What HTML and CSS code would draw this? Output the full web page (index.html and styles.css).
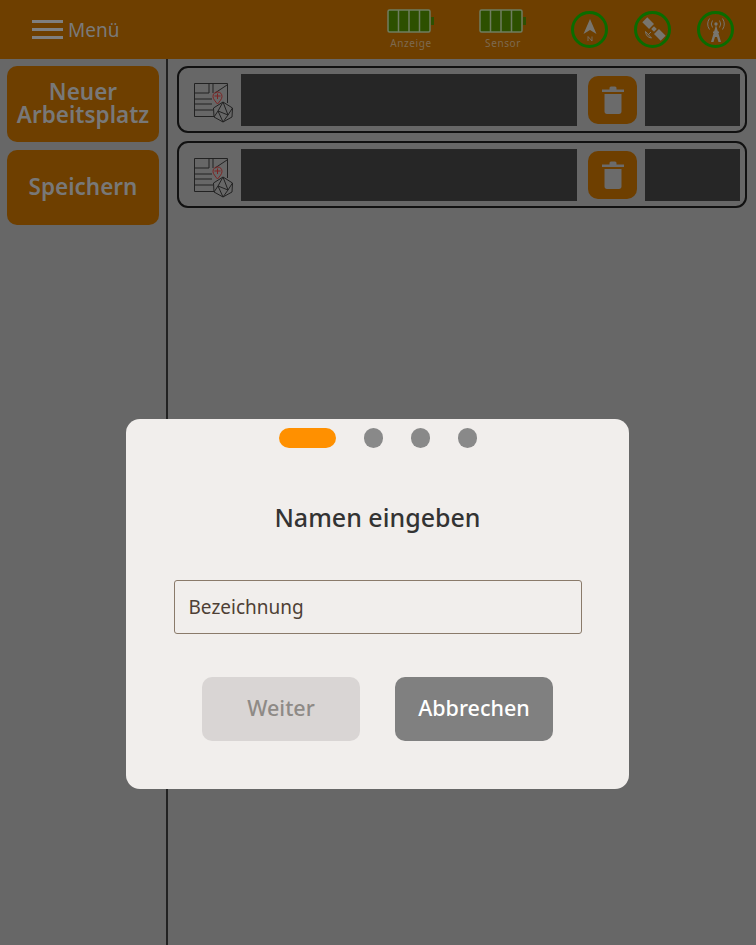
FILE: index.html
```html
<!DOCTYPE html>
<html lang="de">
<head>
    <meta charset="UTF-8">
    <meta name="viewport" content="width=device-width, initial-scale=1.0">
    <title>Arbeitsplatz</title>
    <link rel="stylesheet" href="styles.css">
</head>
<body>
    <header class="topbar">
        <div class="menu">
            <div class="burger"><span></span><span></span><span></span></div>
            <span class="menu-label">Menü</span>
        </div>
        <div class="battery">
            <svg width="48" height="24" viewBox="0 0 48 24">
                <rect x="1" y="1" width="42" height="22" rx="1.5" fill="#2d5000" stroke="#6f7d5f" stroke-width="1.5"/>
                <path d="M11.5 1v22M22 1v22M32.5 1v22" stroke="#6f7d5f" stroke-width="1.5"/>
                <rect x="44" y="8" width="3" height="8" fill="#2d5000"/>
            </svg>
            <span>Anzeige</span>
        </div>
        <div class="battery">
            <svg width="48" height="24" viewBox="0 0 48 24">
                <rect x="1" y="1" width="42" height="22" rx="1.5" fill="#2d5000" stroke="#6f7d5f" stroke-width="1.5"/>
                <path d="M11.5 1v22M22 1v22M32.5 1v22" stroke="#6f7d5f" stroke-width="1.5"/>
                <rect x="44" y="8" width="3" height="8" fill="#2d5000"/>
            </svg>
            <span>Sensor</span>
        </div>
        <div class="status">
            <svg width="18" height="24" viewBox="0 0 18 24">
                <path d="M9 1L15.500 16L9 12L2.500 16Z" fill="#78756e"/>
                <path d="M7 23v-4.500l4 4.500v-4.500" fill="none" stroke="#78756e" stroke-width="0.800"/>
            </svg>
        </div>
        <div class="status">
            <svg width="26" height="26" viewBox="0 0 26 26">
                <g transform="rotate(45 14 12)" fill="#78756e">
                    <rect x="12" y="10" width="4" height="4"/>
                    <rect x="1" y="8.500" width="9.500" height="7"/>
                    <rect x="17.500" y="8.500" width="9.500" height="7"/>
                </g>
                <path d="M5.500 14.500a7 7 0 0 0 6 6.500M5.500 14.500l6 6.500M8 18l3-3" fill="none" stroke="#78756e" stroke-width="1"/>
            </svg>
        </div>
        <div class="status">
            <svg width="24" height="28" viewBox="0 0 24 28">
                <path d="M12 9L7 26H9.500L11 21H13L14.500 26H17L12 9Z" fill="#78756e"/>
                <rect x="9" y="15.500" width="6" height="1.500" fill="#78756e"/>
                <circle cx="12" cy="8" r="1.700" fill="#78756e"/>
                <path d="M8.500 4.500a6 6 0 0 0 0 7M15.500 4.500a6 6 0 0 1 0 7M5.500 2.500a10 10 0 0 0 0 11M18.500 2.500a10 10 0 0 1 0 11" fill="none" stroke="#78756e" stroke-width="1"/>
            </svg>
        </div>
    </header>

    <div class="main">
        <aside class="sidebar">
            <button class="side-btn first">Neuer Arbeitsplatz</button>
            <button class="side-btn">Speichern</button>
        </aside>
        <section class="list">
            <div class="row">
                <svg class="row-icon" width="42" height="42" viewBox="0 0 42 42">
                    <g fill="none" stroke="#222" stroke-width="1">
                        <path d="M22 35.500H2.500V2.500H35.500V22M2.500 12H17V2.500M21 2.500V12M2.500 18H20M2.500 23H20M2.500 29H21M35 4L23 12"/>
                        <path d="M31 21L40.500 27L40 36L31 41L22 36L21.500 27ZM31 21L26 30L36 34L40.500 27M26 30L22 36M26 30L31 41L36 34L31 21"/>
                    </g>
                    <path d="M25.500 11c3 0 4.500 2 4.500 4.500 0 2.500-2.500 5-4.500 7.500-2-2.500-4.500-5-4.500-7.500 0-2.500 1.500-4.500 4.500-4.500ZM22.500 15h6M25.500 12.500V18" fill="none" stroke="#7e2424" stroke-width="1"/>
                </svg>
                <div class="dark-cell wide"></div>
                <button class="trash">
                    <svg width="22" height="28" viewBox="0 0 22 28">
                        <path d="M0 3.500H22V6H0ZM7.500 2C7.500 1 8.500 .5 9.500 .5H12.500C13.500 .5 14.500 1 14.500 2V3.500H7.500ZM2.500 8H19.500V25.500C19.500 27 18.500 28 17 28H5C3.500 28 2.500 27 2.500 25.500Z" fill="#6b6b6b"/>
                    </svg>
                </button>
                <div class="dark-cell narrow"></div>
            </div>
            <div class="row">
                <svg class="row-icon" width="42" height="42" viewBox="0 0 42 42">
                    <g fill="none" stroke="#222" stroke-width="1">
                        <path d="M22 35.500H2.500V2.500H35.500V22M2.500 12H17V2.500M21 2.500V12M2.500 18H20M2.500 23H20M2.500 29H21M35 4L23 12"/>
                        <path d="M31 21L40.500 27L40 36L31 41L22 36L21.500 27ZM31 21L26 30L36 34L40.500 27M26 30L22 36M26 30L31 41L36 34L31 21"/>
                    </g>
                    <path d="M25.500 11c3 0 4.500 2 4.500 4.500 0 2.500-2.500 5-4.500 7.500-2-2.500-4.500-5-4.500-7.500 0-2.500 1.500-4.500 4.500-4.500ZM22.500 15h6M25.500 12.500V18" fill="none" stroke="#7e2424" stroke-width="1"/>
                </svg>
                <div class="dark-cell wide"></div>
                <button class="trash">
                    <svg width="22" height="28" viewBox="0 0 22 28">
                        <path d="M0 3.500H22V6H0ZM7.500 2C7.500 1 8.500 .5 9.500 .5H12.500C13.500 .5 14.500 1 14.500 2V3.500H7.500ZM2.500 8H19.500V25.500C19.500 27 18.500 28 17 28H5C3.500 28 2.500 27 2.500 25.500Z" fill="#6b6b6b"/>
                    </svg>
                </button>
                <div class="dark-cell narrow"></div>
            </div>
        </section>
    </div>

    <!-- Dialog -->
    <div class="overlay">
        <div class="dialog">
            <div class="steps">
                <span class="step active"></span>
                <span class="step"></span>
                <span class="step"></span>
                <span class="step"></span>
            </div>
            <h2>Namen eingeben</h2>
            <input class="name-input" type="text" placeholder="Bezeichnung">
            <div class="actions">
                <button class="btn disabled">Weiter</button>
                <button class="btn cancel">Abbrechen</button>
            </div>
        </div>
    </div>
</body>
</html>
```

FILE: styles.css
```css
* {
    box-sizing: border-box;
}
body {
    font-family: "Noto Sans", sans-serif;
    margin: 0;
    padding: 0;
    height: 945px;
    overflow: hidden;
    background-color: #676767;
}
button {
    font-family: inherit;
    border: none;
    padding: 0;
}

/* Top bar */
.topbar {
    display: flex;
    align-items: center;
    height: 59px;
    padding-left: 32px;
    background-color: #6e3f00;
}
.menu {
    display: flex;
    align-items: center;
    gap: 5px;
    width: 355px;
}
.burger {
    display: flex;
    flex-direction: column;
    gap: 5px;
    width: 31px;
}
.burger span {
    height: 3px;
    background-color: #7f7f7f;
}
.menu-label {
    font-size: 19px;
    color: #7a7a7a;
}
.battery {
    display: flex;
    flex-direction: column;
    align-items: center;
    gap: 3px;
    width: 48px;
    margin-right: 44px;
}
.battery span {
    font-size: 10px;
    line-height: 14px;
    letter-spacing: 0.6px;
    color: #7d6a50;
}
.status {
    display: flex;
    align-items: center;
    justify-content: center;
    flex: none;
    width: 37px;
    height: 37px;
    margin-right: 26px;
    border: 3.5px solid #0a6c00;
    border-radius: 50%;
}
.status:last-child {
    margin-right: 0;
}

/* Main part */
.main {
    display: flex;
    height: 886px;
}
.sidebar {
    display: flex;
    flex-direction: column;
    gap: 8px;
    width: 168px;
    padding: 7px 7px 0;
    border-right: 2px solid #222;
}
.side-btn {
    width: 152px;
    height: 75px;
    padding-bottom: 2px;
    font-size: 22.5px;
    line-height: 23px;
    font-weight: 600;
    color: #787878;
    background-color: #6e3f00;
    border-radius: 10px;
}
.side-btn.first {
    height: 76px;
}
.list {
    display: flex;
    flex-direction: column;
    gap: 8px;
    padding: 7px 0 0 9px;
}
.row {
    display: flex;
    align-items: center;
    width: 570px;
    height: 67px;
    padding: 0 5px 0 13px;
    border: 2px solid #111;
    border-radius: 11px;
}
.row-icon {
    flex: none;
    margin-top: 5px;
}
.dark-cell {
    height: 52px;
    background-color: #262626;
}
.wide {
    width: 336px;
    margin-left: 7px;
}
.narrow {
    width: 95px;
    margin-left: 8px;
}
.trash {
    display: flex;
    align-items: center;
    justify-content: center;
    width: 49px;
    height: 48px;
    margin-left: 11px;
    background-color: #6e3f00;
    border-radius: 10px;
}

/* Dialog */
.overlay {
    position: absolute;
    top: 0;
    left: 0;
    width: 100%;
    height: 100%;
    display: flex;
    justify-content: center;
    padding: 419px 1px 0 0;
}
.dialog {
    display: flex;
    flex-direction: column;
    align-items: center;
    width: 503px;
    height: 370px;
    padding-top: 9px;
    background-color: #f1eeec;
    border-radius: 14px;
}
.steps {
    display: flex;
    gap: 28px;
}
.step {
    width: 19px;
    height: 20px;
    background-color: #898989;
    border-radius: 10px;
}
.step.active {
    width: 57px;
    background-color: #ff9000;
}
.dialog h2 {
    margin: 52px 0 46px;
    font-size: 25px;
    line-height: 34px;
    font-weight: 500;
    color: #333;
}
.name-input {
    width: 408px;
    height: 54px;
    padding: 0 14px;
    font-family: inherit;
    font-size: 19px;
    background-color: transparent;
    border: 1px solid #8a7a6a;
    border-radius: 3px;
}
.name-input::placeholder {
    color: #4e3f35;
    opacity: 1;
}
.actions {
    display: flex;
    gap: 35px;
    margin-top: 43px;
}
.btn {
    width: 158px;
    height: 64px;
    padding-bottom: 3px;
    font-size: 21.5px;
    font-weight: 500;
    border-radius: 10px;
}
.disabled {
    color: #8e8a86;
    background-color: #d9d5d4;
}
.cancel {
    color: white;
    background-color: #808080;
}
```
